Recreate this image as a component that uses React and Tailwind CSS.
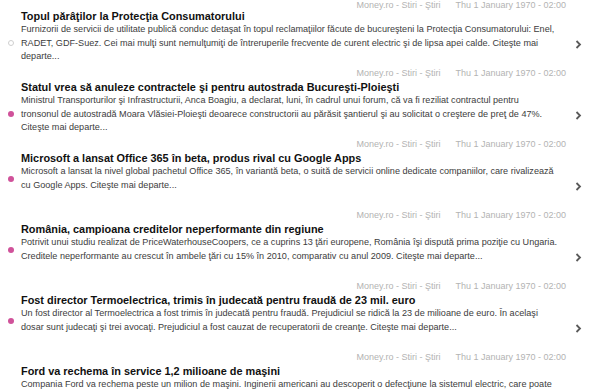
import React from 'react';

// descriptions are kept in the same lines as the source page wraps them
const news = [
  {
    title: 'Topul părâţilor la Protecţia Consumatorului',
    lines: [
      'Furnizorii de servicii de utilitate publică conduc detaşat în topul reclamaţiilor făcute de bucureşteni la Protecţia Consumatorului: Enel,',
      'RADET, GDF-Suez. Cei mai mulţi sunt nemulţumiţi de întreruperile frecvente de curent electric şi de lipsa apei calde. Citeşte mai',
      'departe...',
    ],
    read: true,
  },
  {
    title: 'Statul vrea să anuleze contractele şi pentru autostrada Bucureşti-Ploieşti',
    lines: [
      'Ministrul Transporturilor şi Infrastructurii, Anca Boagiu, a declarat, luni, în cadrul unui forum, că va fi reziliat contractul pentru',
      'tronsonul de autostradă Moara Vlăsiei-Ploieşti deoarece constructorii au părăsit şantierul şi au solicitat o creştere de preţ de 47%.',
      'Citeşte mai departe...',
    ],
  },
  {
    title: 'Microsoft a lansat Office 365 în beta, produs rival cu Google Apps',
    lines: [
      'Microsoft a lansat la nivel global pachetul Office 365, în variantă beta, o suită de servicii online dedicate companiilor, care rivalizează',
      'cu Google Apps. Citeşte mai departe...',
    ],
  },
  {
    title: 'România, campioana creditelor neperformante din regiune',
    lines: [
      'Potrivit unui studiu realizat de PriceWaterhouseCoopers, ce a cuprins 13 ţări europene, România îşi dispută prima poziţie cu Ungaria.',
      'Creditele neperformante au crescut în ambele ţări cu 15% în 2010, comparativ cu anul 2009. Citeşte mai departe...',
    ],
  },
  {
    title: 'Fost director Termoelectrica, trimis în judecată pentru fraudă de 23 mil. euro',
    lines: [
      'Un fost director al Termoelectrica a fost trimis în judecată pentru fraudă. Prejudiciul se ridică la 23 de milioane de euro. În acelaşi',
      'dosar sunt judecaţi şi trei avocaţi. Prejudiciul a fost cauzat de recuperatorii de creanţe. Citeşte mai departe...',
    ],
  },
  {
    title: 'Ford va rechema în service 1,2 milioane de maşini',
    lines: [
      'Compania Ford va rechema peste un milion de maşini. Inginerii americani au descoperit o defecţiune la sistemul electric, care poate',
      'cauza declanşarea airbag-ului, existând astfel pericolul unor accidente. Citeşte mai departe...',
    ],
  },
];

const Chevron = () => (
  <svg width="7" height="9" viewBox="0 0 7 9">
    <polyline points="1.5,1 5,4.5 1.5,8" fill="none" stroke="#5a5a5a" strokeWidth="1.8" />
  </svg>
);

const NewsItem = ({ item, first }) => (
  <div className={first ? 'flex flex-col' : 'flex flex-col h-[71px]'}>
    <div
      className={
        first
          ? 'h-[9px] leading-[11px] text-[9px] text-[#b3b3b3] flex justify-end pr-[24px] gap-[15px]'
          : 'h-[14px] leading-[14px] text-[9px] text-[#b3b3b3] flex justify-end pr-[24px] gap-[15px]'
      }
    >
      <span>Money.ro - Stiri - Ştiri</span>
      <span>Thu 1 January 1970 - 02:00</span>
    </div>
    <div className="h-[57px] flex">
      <div className="flex-1 flex flex-col">
        <div className="pl-[21px] text-[10.9px] leading-[14px] font-bold text-[#111]">{item.title}</div>
        <div className="flex items-center">
          <div className="w-[21px] flex justify-center shrink-0">
            {item.read ? (
              <span className="w-[6px] h-[6px] rounded-full border border-[#cfcfcf]" />
            ) : (
              <span className="w-[6px] h-[6px] rounded-full bg-[#d0529a]" />
            )}
          </div>
          <p className="flex-1 text-[9.1px] leading-[13.5px] text-[#3c3c3c]">
            {item.lines.map((line, i) => (
              <React.Fragment key={i}>
                {i > 0 && <br />}
                {line}
              </React.Fragment>
            ))}
          </p>
        </div>
      </div>
      <div className="w-[23px] shrink-0 flex justify-center pt-[31px]">
        <div className="h-[9px]">
          <Chevron />
        </div>
      </div>
    </div>
  </div>
);

export default function App() {
  return (
    <div className="w-[590px] h-[389px] overflow-hidden bg-white font-['Liberation_Sans',Arial,sans-serif]">
      {news.map((item, i) => (
        <NewsItem key={i} item={item} first={i === 0} />
      ))}
    </div>
  );
}
